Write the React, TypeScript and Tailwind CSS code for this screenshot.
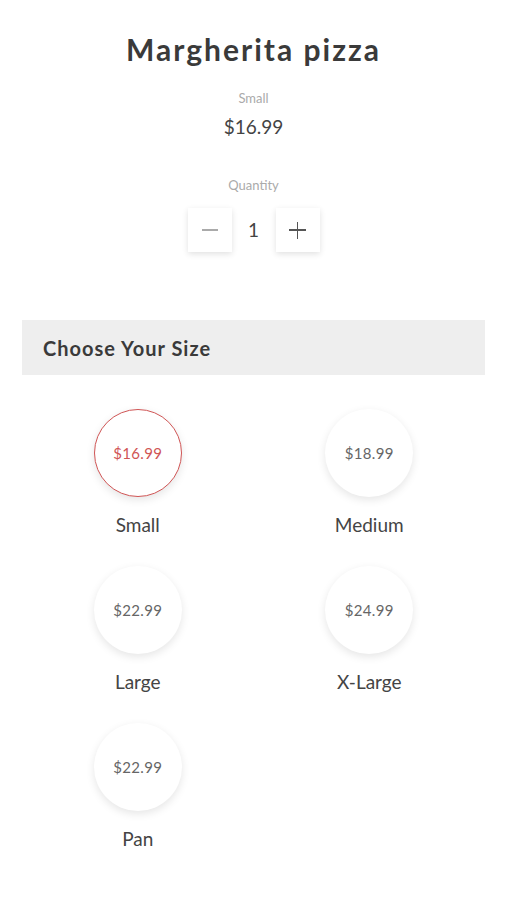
import { useState } from "react";

const SIZES = [
  { name: "Small", price: "$16.99" },
  { name: "Medium", price: "$18.99" },
  { name: "Large", price: "$22.99" },
  { name: "X-Large", price: "$24.99" },
  { name: "Pan", price: "$22.99" },
];

const App = () => {
  const [qty, setQty] = useState(1);
  const [selected, setSelected] = useState(0);

  return (
    <div
      className="min-h-screen bg-white text-[#444]"
      style={{ fontFamily: "Lato, 'Open Sans', sans-serif" }}
    >
      {/* Product header */}
      <div className="flex flex-col items-center pt-[28px]">
        <h1 className="text-[30px] leading-[42px] font-bold tracking-[2px] text-[#3a3a3a]">
          Margherita pizza
        </h1>
        <p className="mt-[20px] text-[13px] leading-[16px] text-[#aaa]">
          {SIZES[selected].name}
        </p>
        <p className="mt-[9px] text-[19px] leading-[24px] text-[#444]">
          {SIZES[selected].price}
        </p>

        <p className="mt-[38px] text-[13px] leading-[16px] text-[#aaa]">Quantity</p>
        <div className="mt-[15px] flex items-center">
          <button
            onClick={() => setQty(Math.max(1, qty - 1))}
            className="w-[44px] h-[44px] bg-white shadow-[0_2px_6px_rgba(0,0,0,0.12)] flex items-center justify-center"
          >
            <span className="block w-[16px] h-[1.5px] bg-[#aaa]" />
          </button>
          <span className="w-[44px] text-center text-[19px] text-[#444]">{qty}</span>
          <button
            onClick={() => setQty(qty + 1)}
            className="w-[44px] h-[44px] bg-white shadow-[0_2px_6px_rgba(0,0,0,0.12)] flex items-center justify-center relative"
          >
            <span className="block w-[17px] h-[1.5px] bg-[#555]" />
            <span className="absolute block w-[1.5px] h-[17px] bg-[#555]" />
          </button>
        </div>
      </div>

      {/* Size section */}
      <div className="mx-[22px] mt-[68px]">
        <div className="h-[55px] bg-[#eeeeee] flex items-center px-[21px]">
          <h2 className="text-[20px] font-bold tracking-[1px] text-[#3a3a3a]">
            Choose Your Size
          </h2>
        </div>

        <div className="grid grid-cols-2 gap-y-[29px] pt-[34px]">
          {SIZES.map((s, i) => (
            <button
              key={s.name}
              onClick={() => setSelected(i)}
              className="flex flex-col items-center"
            >
              <span
                className={`w-[88px] h-[88px] rounded-full bg-white flex items-center justify-center text-[15px] tracking-[0.3px] shadow-[0_3px_8px_rgba(0,0,0,0.1)] ${
                  selected === i
                    ? "border-[1.5px] border-[#d05555] text-[#d05555]"
                    : "text-[#666]"
                }`}
              >
                {s.price}
              </span>
              <span className="mt-[16px] text-[19px] leading-[24px] text-[#444]">
                {s.name}
              </span>
            </button>
          ))}
        </div>
      </div>
    </div>
  );
};

export default App;
